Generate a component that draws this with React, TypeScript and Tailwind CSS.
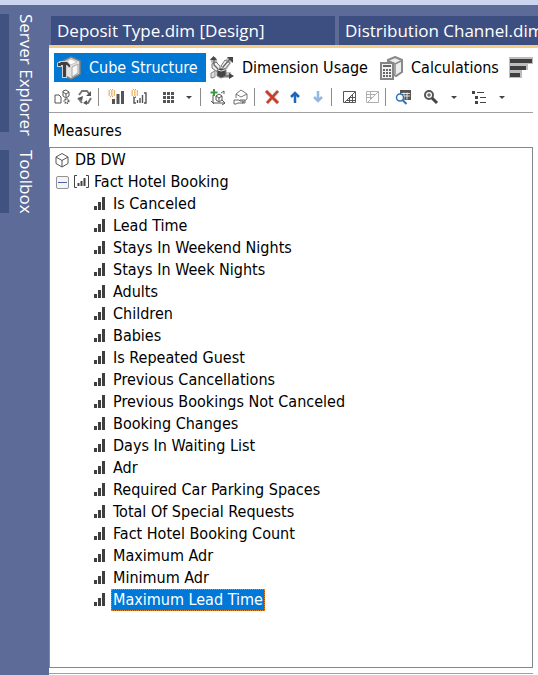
import { useState, type ReactNode } from "react";

const measures = [
  "Is Canceled",
  "Lead Time",
  "Stays In Weekend Nights",
  "Stays In Week Nights",
  "Adults",
  "Children",
  "Babies",
  "Is Repeated Guest",
  "Previous Cancellations",
  "Previous Bookings Not Canceled",
  "Booking Changes",
  "Days In Waiting List",
  "Adr",
  "Required Car Parking Spaces",
  "Total Of Special Requests",
  "Fact Hotel Booking Count",
  "Maximum Adr",
  "Minimum Adr",
  "Maximum Lead Time",
];

function Icon({ children }: { children: ReactNode }) {
  return (
    <svg viewBox="0 0 16 16" className="size-4 shrink-0" fill="none" stroke="#555" aria-hidden="true">
      {children}
    </svg>
  );
}

function BigIcon({ children }: { children: ReactNode }) {
  return (
    <svg viewBox="0 0 24 24" className="size-6 shrink-0" fill="none" aria-hidden="true">
      {children}
    </svg>
  );
}

function Tool({ label, children }: { label: string; children: ReactNode }) {
  return (
    <button type="button" aria-label={label} className="flex h-6 w-[23px] shrink-0 items-center justify-center">
      {children}
    </button>
  );
}

function MenuArrow({ label }: { label: string }) {
  return (
    <button type="button" aria-label={label} className="flex h-6 w-[18px] shrink-0 items-center justify-center">
      <svg viewBox="0 0 6 3" className="h-[3px] w-[6px]" fill="#444" aria-hidden="true">
        <path d="M0 0h6L3 3z" />
      </svg>
    </button>
  );
}

function Divider() {
  return <span className="mr-[5px] ml-[2px] h-[18px] w-px shrink-0 bg-[#8c8c8c]" />;
}

function Sparkle() {
  return (
    <g>
      <path d="M0 0h8v8H0z" fill="#fff" stroke="none" />
      <path d="M.5 2h7M.5 4h7M.5 6h7" stroke="#e8a33d" strokeWidth="1.300" strokeDasharray="1.400 1.200" />
      <path d="M2 .5h4M2 7.500h4" stroke="#d9a866" strokeDasharray="1 1" />
    </g>
  );
}

function Bars() {
  return (
    <svg viewBox="0 0 12 14" className="h-[14px] w-3 shrink-0" fill="#3f3f3f" aria-hidden="true">
      <path d="M0 9h3v4H0zM4 5h3v8H4zM8 0h3v13H8z" />
    </svg>
  );
}

function CubeHammer() {
  return (
    <BigIcon>
      <path d="M14 1l9 4v13l-9 5-8-4V5z" fill="#e4e4e4" stroke="#808080" strokeWidth="1.500" />
      <path d="M14 3l6 3-6 3-6-3z" fill="#fff" stroke="#aaa" strokeWidth=".7" />
      <path d="M15 11l6-3v9l-6 4z" fill="#f6f6f6" stroke="#a5a5a5" />
      <path d="M0 7l3-2h8l3 4v3h-3l-1-2v12H5V11H0z" fill="#d0d0d0" />
      <path d="M1 7h2l1-1h6l3 3v2h-1l-2-2H9v12H6V9H4v1H1z" fill="#404040" />
    </BigIcon>
  );
}

function DimensionIcon() {
  return (
    <BigIcon>
      <path d="M3 2l4 12M20 3l-6 9M11 19h10" stroke="#bdbdbd" strokeWidth="6" />
      <path d="M2 8l4-2 4 4v6l-4-1-4-3zM15 4l5 3-5 6-4-3z" fill="#eee" stroke="#777" />
      <path d="M4 3v6l4 4M20 3l-7 8M13 20h8M4 20l-2 2" stroke="#666" strokeWidth="1.300" />
      <path d="M3.500 0L7 4H0zM17 1h6v6zM19 17l5 3-5 3z" fill="#444" />
      <path d="M7 14l4-2 5 2v6l-5 2-4-2z" fill="#444" stroke="#888" />
      <path d="M8 14l3 1 4-1" stroke="#ddd" />
      <path d="M1 17l4-2v6l-4 1z" fill="#ddd" stroke="#888" />
    </BigIcon>
  );
}

function CalculatorIcon() {
  return (
    <BigIcon>
      <path d="M16 1l7 3v12l-6 4-8-5V4z" fill="#eee" stroke="#8a8a8a" strokeWidth="2" />
      <path d="M10 5l6 3 6-3M16 8v10" stroke="#8a8a8a" strokeWidth="1.500" />
      <path d="M2 7h12v16H2z" fill="#f2f2f2" stroke="#858585" strokeWidth="2" />
      <path d="M4 10h8" stroke="#666" strokeWidth="2" />
      <path d="M4 14h8M4 17h8M4 20h8" stroke="#666" strokeWidth="2" strokeDasharray="2 1" />
    </BigIcon>
  );
}

function KpiIcon() {
  return (
    <BigIcon>
      <path d="M0 1h24v7h-5v6h-6v8H0z" fill="#bdbdbd" />
      <path d="M1 3h22v4H1zM1 10h16v4H1zM1 17h10v4H1z" fill="#3f3f3f" />
    </BigIcon>
  );
}

const views = [
  { name: "Cube Structure", icon: <CubeHammer />, width: "w-[152px]" },
  { name: "Dimension Usage", icon: <DimensionIcon />, width: "w-[168px]" },
  { name: "Calculations", icon: <CalculatorIcon />, width: "w-[129px]" },
];

export default function App() {
  const [view, setView] = useState("Cube Structure");
  const [selected, setSelected] = useState("Maximum Lead Time");
  const [open, setOpen] = useState(true);

  return (
    <div className="flex min-h-screen flex-col overflow-hidden bg-[#5d6b99] font-['DejaVu_Sans_Condensed','DejaVu_Sans',sans-serif] text-base text-black">
      <div className="h-[5px] bg-[#ccd5f0]" />
      <div className="flex grow">
        <nav className="flex w-[49px] shrink-0 flex-col gap-[18px] pt-[9px] font-['Open_Sans',sans-serif] text-[17px] text-white">
          <button type="button" className="flex h-[118px] items-center border-l-[9px] border-[#40527f] pr-1.5 [writing-mode:vertical-rl]">
            <span className="whitespace-nowrap">Server Explorer</span>
          </button>
          <button type="button" className="flex h-[63px] items-center border-l-[9px] border-[#40527f] pr-1.5 [writing-mode:vertical-rl]">
            <span className="whitespace-nowrap">Toolbox</span>
          </button>
        </nav>

        <div className="flex min-w-0 grow flex-col">
          <div className="flex gap-1 border-b-[3px] border-[#f5cc84] pt-[11px] pl-[2px] font-['Open_Sans',sans-serif] text-[17px] text-white">
            <button type="button" className="h-[29px] w-[284px] shrink-0 bg-[#3d4f81] pl-1.5 text-left whitespace-nowrap">
              Deposit Type.dim [Design]
            </button>
            <button type="button" className="h-[29px] min-w-0 grow bg-[#3d4f81] pl-1.5 text-left whitespace-nowrap">
              Distribution Channel.dim
            </button>
          </div>

          <main className="flex grow flex-col bg-white pr-[5px]">
            <div className="flex gap-px pt-[5px] pl-[5px]">
              {views.map((v) => (
                <button
                  key={v.name}
                  type="button"
                  onClick={() => setView(v.name)}
                  className={`flex h-[29px] shrink-0 items-center gap-2 pl-[3px] whitespace-nowrap ${v.width} ${view === v.name ? "bg-[#0078d4] text-white" : ""}`}
                >
                  {v.icon}
                  {v.name}
                </button>
              ))}
              <button type="button" aria-label="KPIs" className="ml-[3px] flex h-[29px] items-center">
                <KpiIcon />
              </button>
            </div>

            <div className="flex h-[31px] items-center border-b border-[#a0a0a0] pl-px">
              <Tool label="Process">
                <Icon>
                  <path d="M1 6h4l2 2v6H1zM9 2l3-1 3 2v4l-3 2-3-2zM9 3l3 2 3-2M12 5v3" />
                  <circle cx="12.500" cy="12" r="2" strokeDasharray="1 .7" strokeWidth="2" />
                </Icon>
              </Tool>
              <Tool label="Reconnect">
                <Icon>
                  <path d="M2 6l3-4h5l3 4M14 9l-3 5H8M5 14l-4-5" stroke="#777" strokeWidth="2" />
                  <path d="M14 2v5H9zM1 9l5-2-1 5zM10 11v5l-4-2z" fill="#555" stroke="none" />
                </Icon>
              </Tool>
              <Divider />
              <Tool label="New Measure">
                <Icon>
                  <path d="M4 10h3v5H4zM8.500 5h3v10h-3zM13 2h3v13h-3z" fill="#555" stroke="none" />
                  <Sparkle />
                </Icon>
              </Tool>
              <Tool label="New Measure Group">
                <Icon>
                  <path d="M5 8H3v6h2M13 4h2v10h-2M6.500 11v3M9 9v5M11.500 6v8" strokeWidth="1.400" />
                  <Sparkle />
                </Icon>
              </Tool>
              <span className="w-[7px]" />
              <Tool label="Show Measures Grid">
                <Icon>
                  <path d="M2 3h3v3H2zM6 3h3v3H6zM10 3h3v3h-3zM2 7h3v3H2zM6 7h3v3H6zM10 7h3v3h-3zM2 11h3v3H2zM6 11h3v3H6zM10 11h3v3h-3z" fill="#555" stroke="none" />
                </Icon>
              </Tool>
              <MenuArrow label="Grid options" />
              <Divider />
              <Tool label="New Linked Object">
                <Icon>
                  <path d="M3 6v8h12M12 11l3 3-3 2M1 12l2 2 1 1M6 7l3-2 3 2v4l-3 2-3-2zM6 7l3 2 3-2M9 9v3M11 4l3-2v3" />
                  <path d="M4 0v7M.5 3.500h7" stroke="#3a9b3a" strokeWidth="2" />
                </Icon>
              </Tool>
              <Tool label="Add Cube Dimension">
                <Icon>
                  <path d="M3 9V5l5-4 6 4v5l-4 3M3 5l5 3 6-3" stroke="#777" />
                  <path d="M1 11h5l1 1h3v2H5l-2 1H1zM7 11h5v3H9" stroke="#666" />
                </Icon>
              </Tool>
              <Divider />
              <Tool label="Delete">
                <Icon>
                  <path d="M2 2l12 12M14 2L3 14" stroke="#ccc" strokeWidth="4" />
                  <path d="M2 2l12 12M14 2L3 14" stroke="#c63f25" strokeWidth="2.500" />
                </Icon>
              </Tool>
              <Tool label="Move Up">
                <Icon>
                  <path d="M8 14V4M4 8l4-4 4 4" stroke="#1c6ab5" strokeWidth="2.500" />
                </Icon>
              </Tool>
              <Tool label="Move Down">
                <Icon>
                  <path d="M8 2v10M4 8l4 4 4-4" stroke="#91b9e2" strokeWidth="2.500" />
                </Icon>
              </Tool>
              <Divider />
              <Tool label="Show Tables">
                <Icon>
                  <path d="M2.500 2.500h12v11h-12zM4 13L14 3M8.500 8.500v5M11.500 5.500v8M8 8.500h6M5 11.500h9" />
                </Icon>
              </Tool>
              <Tool label="Find Table">
                <Icon>
                  <path d="M2.500 2.500h12v11h-12zM3 5.500h9M6.500 3v7M3 8.500h6M4 13L14 3" stroke="#b0b0b0" />
                </Icon>
              </Tool>
              <Divider />
              <Tool label="Explore Data">
                <Icon>
                  <path d="M5 1h11v10H9V6H5z" fill="#555" stroke="none" />
                  <path d="M6 4.500h9M6 7h9M9 3.500v7M12 3.500v7" stroke="#fff" strokeWidth=".8" />
                  <circle cx="5" cy="8.500" r="3.500" fill="#fff" stroke="#2a73b8" strokeWidth="1.500" />
                  <path d="M7.500 11l4 4" stroke="#2a73b8" strokeWidth="2" />
                </Icon>
              </Tool>
              <span className="w-[5px]" />
              <Tool label="Zoom">
                <Icon>
                  <circle cx="6" cy="6" r="4" stroke="#555" strokeWidth="2" />
                  <path d="M4 6h4M6 4v4" stroke="#444" />
                  <path d="M9 9l5 5" stroke="#444" strokeWidth="3" />
                </Icon>
              </Tool>
              <span className="w-[3px]" />
              <MenuArrow label="Zoom options" />
              <span className="w-[4px]" />
              <Tool label="Tree View">
                <Icon>
                  <path d="M1 2h3v3H1zM4 7h3v3H4zM4 12h3v3H4z" fill="#444" stroke="none" />
                  <path d="M6 3.500h7M9 8.500h6M9 13.500h6" stroke="#444" />
                </Icon>
              </Tool>
              <span className="w-[3px]" />
              <MenuArrow label="Tree options" />
            </div>

            <h2 className="flex h-[34px] items-center pt-0.5 pl-1">Measures</h2>

            <section className="grow border border-[#828790] pt-px">
              <div className="flex h-[22px] items-center gap-[5px] pl-1">
                <Icon>
                  <path d="M8 1.500l6 3.500v6.500L8 15l-6-3.500V5zM2 5l6 3.500L14 5M8 8.500V15" stroke="#555" />
                </Icon>
                DB DW
              </div>
              <div className="flex h-[22px] items-center pl-1.5">
                <button
                  type="button"
                  aria-label="Toggle Fact Hotel Booking"
                  onClick={() => setOpen(!open)}
                  className="flex size-[13px] items-center justify-center rounded-[2px] border border-[#929292] bg-[#f4f4f4]"
                >
                  <span className="h-px w-[9px] bg-[#4b62a8]" />
                </button>
                <svg viewBox="0 0 15 14" className="mr-[5px] ml-[5px] h-[14px] w-[15px]" fill="none" stroke="#444" aria-hidden="true">
                  <path d="M3 .5H.5v12H3M12 .5h2.500v12H12" />
                  <path d="M4.500 8v3M7.500 6v5M10.500 3v8" strokeWidth="2" />
                </svg>
                Fact Hotel Booking
              </div>
              {open && (
                <ul>
                  {measures.map((m) => (
                    <li key={m} className="flex h-[22px] items-center gap-[5px] pl-11">
                      <Bars />
                      <button
                        type="button"
                        onClick={() => setSelected(m)}
                        className={`flex h-[22px] items-center border border-dotted px-px whitespace-nowrap ${selected === m ? "border-[#e98224] bg-[#0078d7] text-white" : "border-transparent"}`}
                      >
                        {m}
                      </button>
                    </li>
                  ))}
                </ul>
              )}
            </section>
            <div className="mt-[5px] h-[2px] border-t border-[#a0a0a0]" />
          </main>
        </div>
      </div>
    </div>
  );
}
